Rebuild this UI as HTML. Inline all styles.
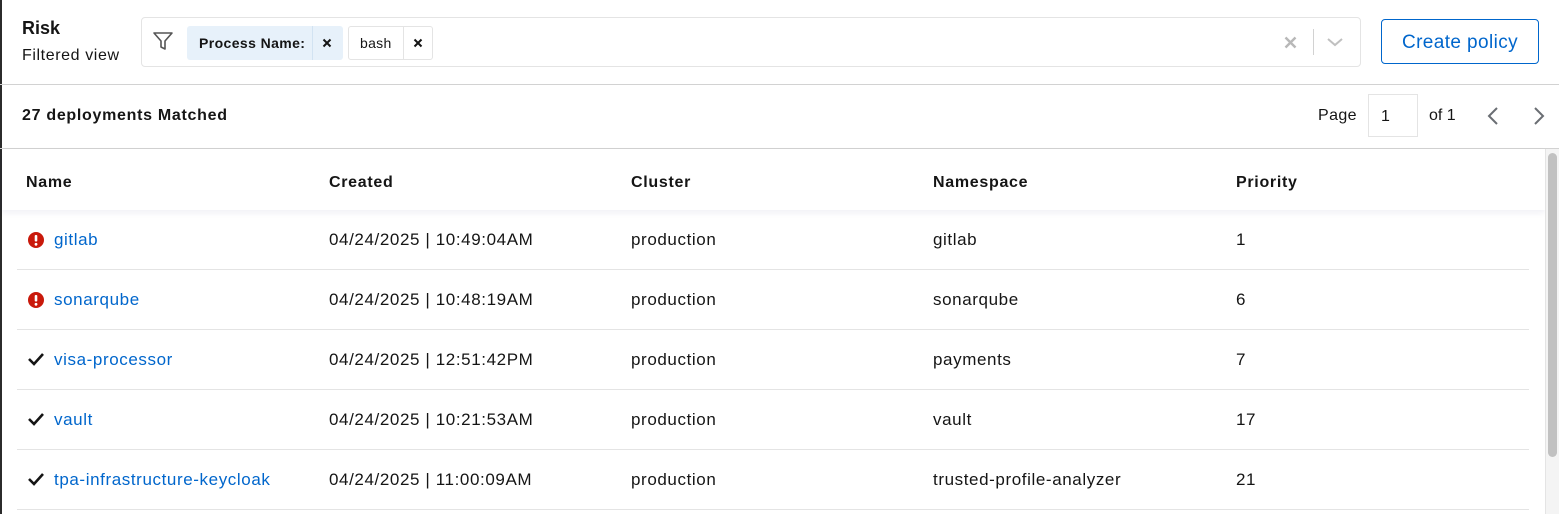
<!DOCTYPE html>
<html><head><style>
*{box-sizing:border-box;margin:0;padding:0}
body{width:1559px;height:514px;overflow:hidden;background:#fff;font-family:"Liberation Sans",sans-serif;color:#151515;position:relative}
.abs{position:absolute}
.lb{position:absolute;left:0;top:0;width:2px;height:514px;background:#2b2b2b}
.hr{position:absolute;left:0;right:0;height:1px;background:#d2d2d2}
.th{position:absolute;top:174px;font-size:16px;font-weight:bold;letter-spacing:0.7px}
.row{position:absolute;left:17px;width:1512px;height:60px;border-bottom:1px solid #e4e4e4;font-size:17px;letter-spacing:0.6px}
.row span{position:absolute;top:20px}
.row a{color:#0066cc;text-decoration:none}
</style></head><body>
<div class="lb"></div>
<div class="abs" style="left:22px;top:18px;font-size:18px;font-weight:bold">Risk</div>
<div class="abs" style="left:22px;top:47px;font-size:16px;letter-spacing:0.6px">Filtered view</div>
<div class="abs" style="left:141px;top:17px;width:1220px;height:50px;border:1px solid #e4e4e4;border-radius:4px"></div>
<svg class="abs" style="left:152px;top:30px" width="22" height="22" viewBox="0 0 22 22"><path d="M2 3h18l-7 8v8l-4-2v-6z" fill="none" stroke="#555" stroke-width="1.6" stroke-linejoin="round"/></svg>
<div class="abs" style="left:187px;top:26px;width:156px;height:34px;background:#e7f1fa;border-radius:3px"></div>
<div class="abs" style="left:312px;top:26px;width:1px;height:34px;background:#d2e3f2"></div>
<div class="abs" style="left:199px;top:35px;font-size:14px;font-weight:bold;letter-spacing:0.4px">Process Name:</div>
<svg class="abs" style="left:322px;top:38px" width="10" height="10"><path d="M1.5 1.5l7 7M8.5 1.5l-7 7" stroke="#151515" stroke-width="2"/></svg>
<div class="abs" style="left:348px;top:26px;width:85px;height:34px;border:1px solid #e4e4e4;border-radius:3px"></div>
<div class="abs" style="left:403px;top:27px;width:1px;height:32px;background:#e4e4e4"></div>
<div class="abs" style="left:360px;top:35px;font-size:14px;letter-spacing:0.3px">bash</div>
<svg class="abs" style="left:413px;top:38px" width="10" height="10"><path d="M1.5 1.5l7 7M8.5 1.5l-7 7" stroke="#151515" stroke-width="2"/></svg>
<svg class="abs" style="left:1284px;top:36px" width="13" height="13"><path d="M1.5 1.5l10 10M11.5 1.5l-10 10" stroke="#b8b8b8" stroke-width="2.4"/></svg>
<div class="abs" style="left:1313px;top:29px;width:1px;height:26px;background:#d2d2d2"></div>
<svg class="abs" style="left:1326px;top:36px" width="18" height="12"><path d="M2 3l7 6 7-6" fill="none" stroke="#c0c0c0" stroke-width="2"/></svg>
<div class="abs" style="left:1381px;top:19px;width:158px;height:45px;border:1px solid #0066cc;border-radius:4px;color:#0066cc;font-size:19px;text-align:center;line-height:45px;letter-spacing:0.4px">Create policy</div>
<div class="hr" style="top:84px"></div>
<div class="abs" style="left:22px;top:107px;font-size:16px;font-weight:bold;letter-spacing:0.7px">27 deployments Matched</div>
<div class="abs" style="left:1318px;top:107px;font-size:16px;letter-spacing:0.4px">Page</div>
<div class="abs" style="left:1368px;top:94px;width:50px;height:43px;border:1px solid #e4e4e4;font-size:16px;padding:13px 0 0 12px">1</div>
<div class="abs" style="left:1429px;top:107px;font-size:16px">of 1</div>
<svg class="abs" style="left:1486px;top:106px" width="14" height="20"><path d="M11 2l-8 8 8 8" fill="none" stroke="#6a6e73" stroke-width="2"/></svg>
<svg class="abs" style="left:1532px;top:106px" width="14" height="20"><path d="M3 2l8 8-8 8" fill="none" stroke="#6a6e73" stroke-width="2"/></svg>
<div class="hr" style="top:148px"></div>
<div class="abs" style="left:2px;top:149px;width:1543px;height:61px;box-shadow:0 3px 6px rgba(3,3,100,0.06)"></div>
<div class="th" style="left:26px">Name</div>
<div class="th" style="left:329px">Created</div>
<div class="th" style="left:631px">Cluster</div>
<div class="th" style="left:933px">Namespace</div>
<div class="th" style="left:1236px">Priority</div>
<div class="abs" style="left:1545px;top:149px;width:14px;height:365px;background:#f4f4f4;border-left:1px solid #e4e4e4"></div>
<div class="abs" style="left:1548px;top:153px;width:9px;height:304px;background:#c1c1c1;border-radius:5px"></div>

<div class="row" style="top:210px"><svg class="abs" style="left:10px;top:21px" width="18" height="18"><circle cx="9" cy="9" r="8" fill="#c9190b"/><rect x="7.7" y="4" width="2.6" height="6.5" rx="1" fill="#fff"/><circle cx="9" cy="13.3" r="1.4" fill="#fff"/></svg><span style="left:37px"><a>gitlab</a></span><span style="left:312px">04/24/2025 | 10:49:04AM</span><span style="left:614px">production</span><span style="left:916px">gitlab</span><span style="left:1219px">1</span></div>
<div class="row" style="top:270px"><svg class="abs" style="left:10px;top:21px" width="18" height="18"><circle cx="9" cy="9" r="8" fill="#c9190b"/><rect x="7.7" y="4" width="2.6" height="6.5" rx="1" fill="#fff"/><circle cx="9" cy="13.3" r="1.4" fill="#fff"/></svg><span style="left:37px"><a>sonarqube</a></span><span style="left:312px">04/24/2025 | 10:48:19AM</span><span style="left:614px">production</span><span style="left:916px">sonarqube</span><span style="left:1219px">6</span></div>
<div class="row" style="top:330px"><svg class="abs" style="left:10px;top:21px" width="18" height="16"><path d="M2 8l5 5 9-10" fill="none" stroke="#151515" stroke-width="2.6"/></svg><span style="left:37px"><a>visa-processor</a></span><span style="left:312px">04/24/2025 | 12:51:42PM</span><span style="left:614px">production</span><span style="left:916px">payments</span><span style="left:1219px">7</span></div>
<div class="row" style="top:390px"><svg class="abs" style="left:10px;top:21px" width="18" height="16"><path d="M2 8l5 5 9-10" fill="none" stroke="#151515" stroke-width="2.6"/></svg><span style="left:37px"><a>vault</a></span><span style="left:312px">04/24/2025 | 10:21:53AM</span><span style="left:614px">production</span><span style="left:916px">vault</span><span style="left:1219px">17</span></div>
<div class="row" style="top:450px"><svg class="abs" style="left:10px;top:21px" width="18" height="16"><path d="M2 8l5 5 9-10" fill="none" stroke="#151515" stroke-width="2.6"/></svg><span style="left:37px"><a>tpa-infrastructure-keycloak</a></span><span style="left:312px">04/24/2025 | 11:00:09AM</span><span style="left:614px">production</span><span style="left:916px">trusted-profile-analyzer</span><span style="left:1219px">21</span></div>
</body></html>
